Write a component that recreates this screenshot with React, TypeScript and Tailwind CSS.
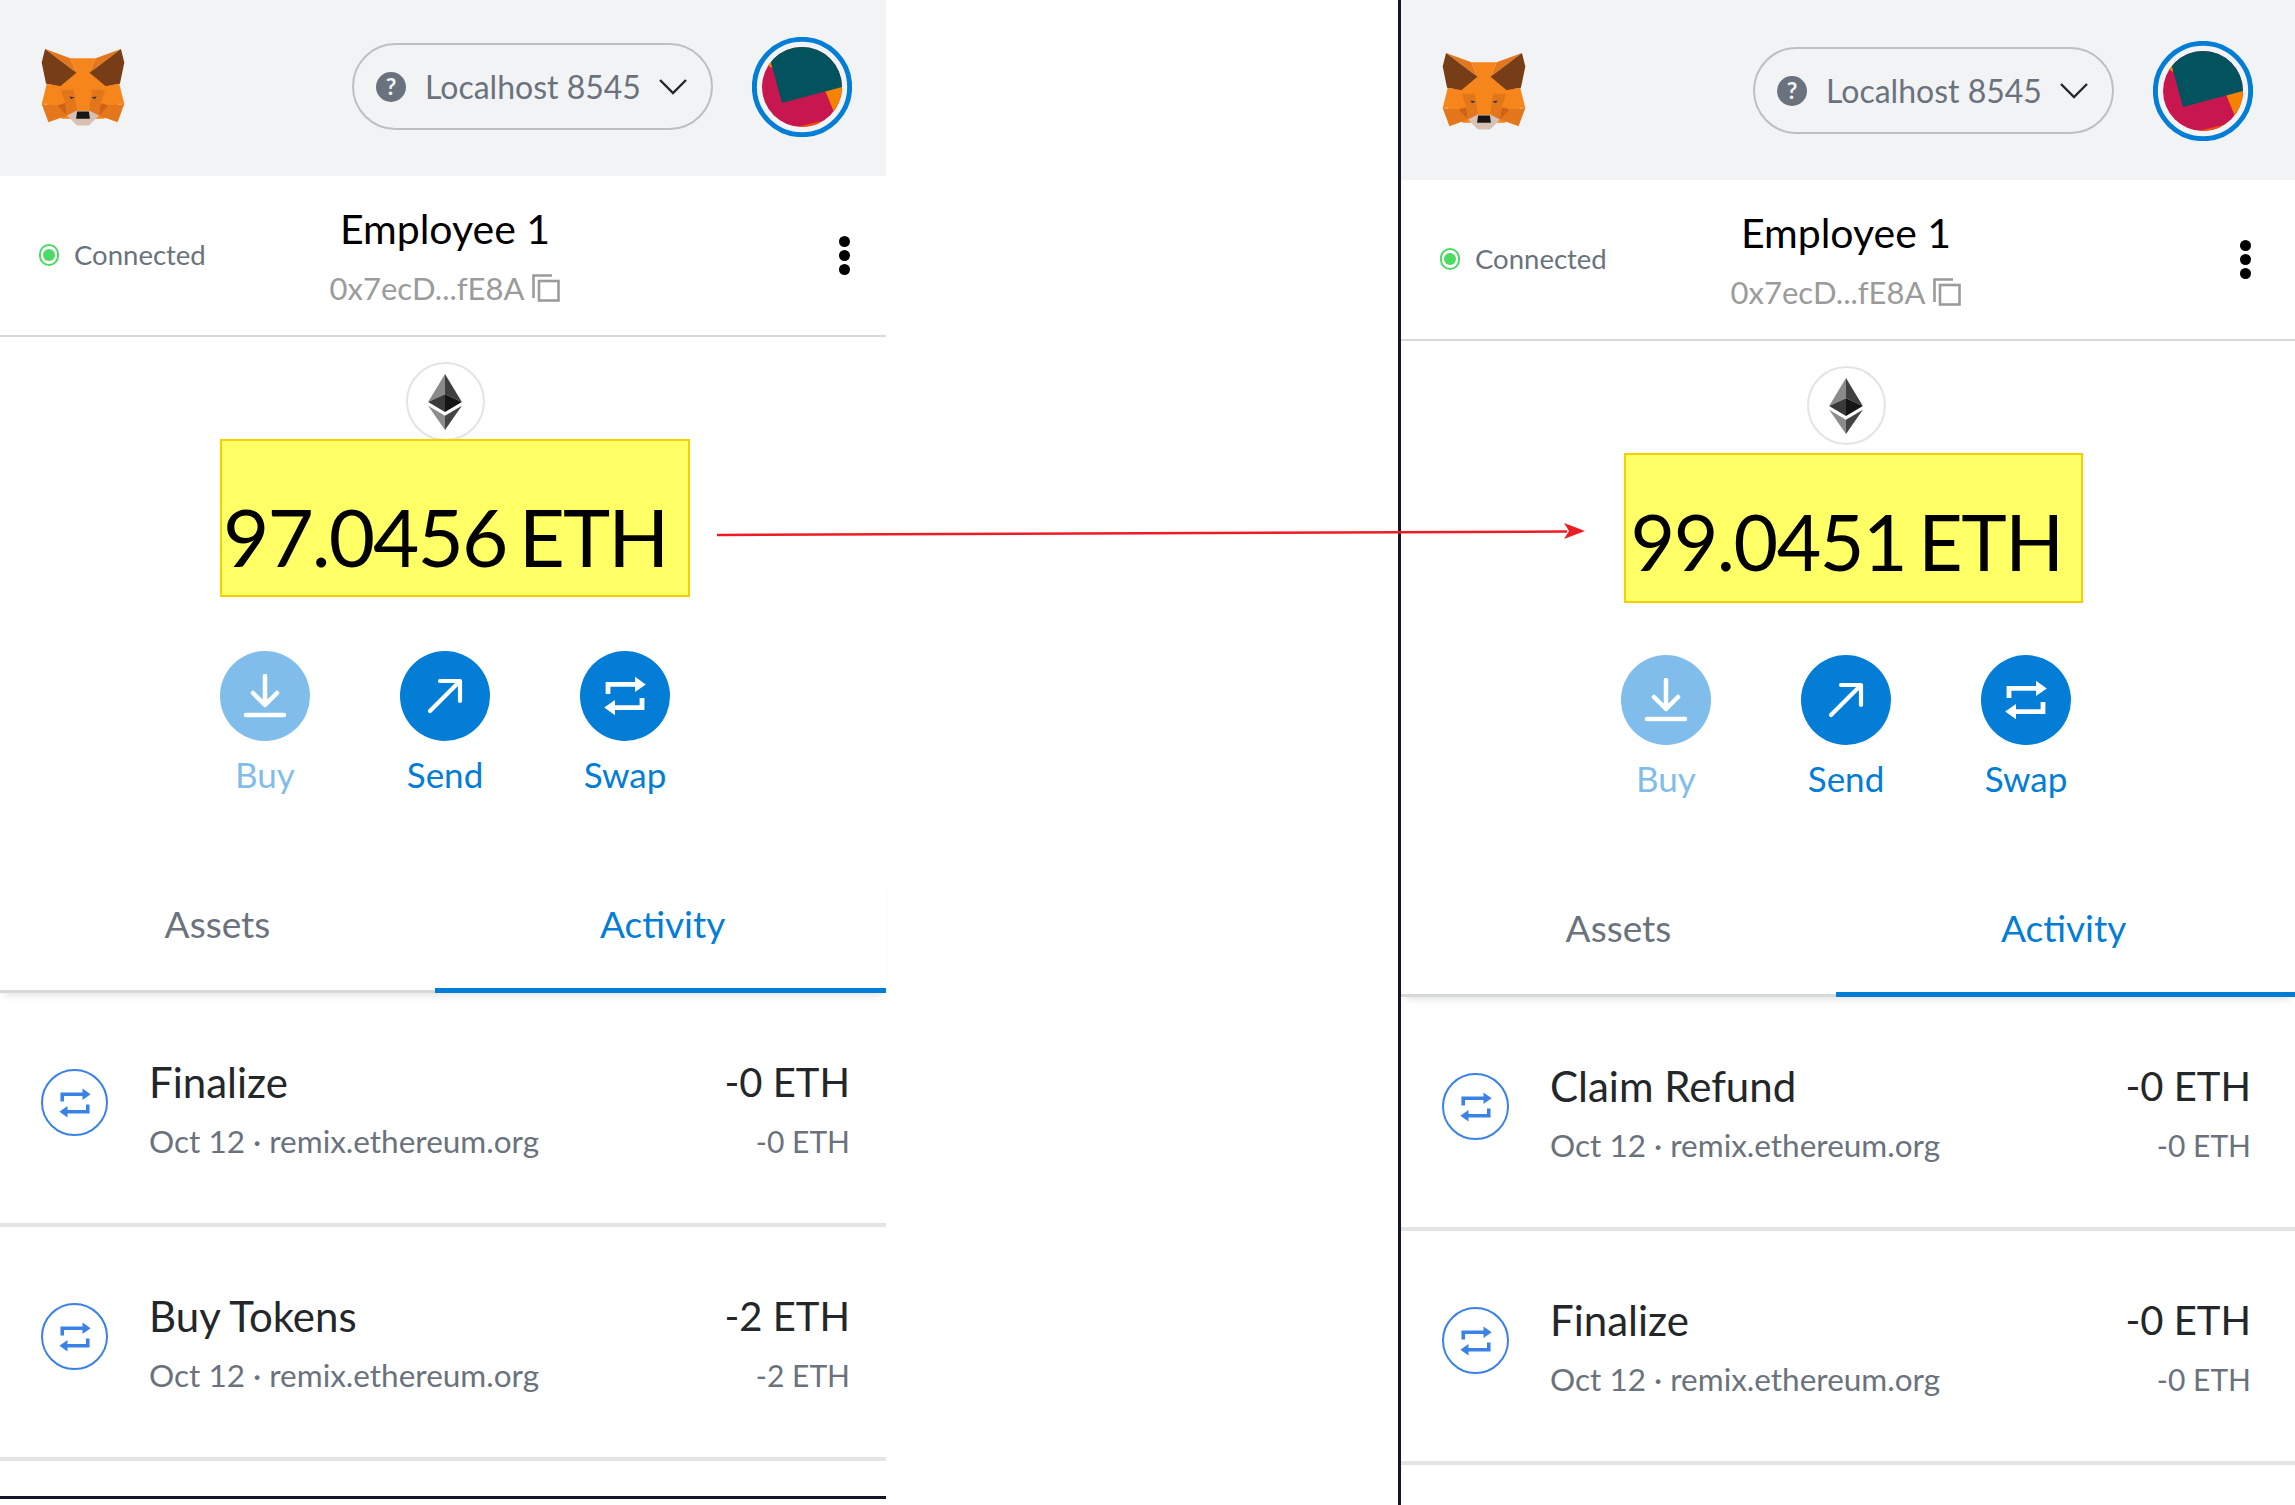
const font = { fontFamily: '"Lato", "Open Sans", sans-serif' };

function Fox() {
  const half = (
    <>
      <polygon points="75,55 150,82 168,125" fill="#e4761b" />
      <polygon points="75,55 168,125 120,165 78,158 65,95" fill="#763d16" />
      <polygon points="80,158 120,165 135,215 65,218" fill="#f6851b" />
      <polygon points="65,218 112,222 140,252 85,272" fill="#e4761b" />
      <polygon points="112,222 135,215 140,252" fill="#cd6116" />
      <polygon points="122,177 162,175 170,238 135,215" fill="#e2761b" />
      <polygon points="147,196 163,199 152,203" fill="#233447" />
      <polygon points="135,216 170,238 140,252" fill="#e4751f" />
    </>
  );
  return (
    <svg viewBox="60 50 255 235" className="h-[80px] w-[86px]">
      <polygon points="110,120 265,120 295,218 250,262 125,262 80,218" fill="#f6851b" />
      <polygon points="150,82 225,82 207,125 215,176 160,176 168,125" fill="#f6851b" />
      {half}
      <g transform="translate(375,0) scale(-1,1)">{half}</g>
      <polygon points="160,175 215,175 205,238 170,238" fill="#f6851b" />
      <polygon points="140,252 168,238 207,238 235,252 205,282 170,282" fill="#d7c1b3" />
      <polygon points="170,240 205,240 208,262 167,262" fill="#161616" />
    </svg>
  );
}

function Avatar() {
  return (
    <svg viewBox="35 47 300 300" className="h-[100px] w-[100px]">
      <clipPath id="jazz">
        <circle cx="185" cy="197" r="120" />
      </clipPath>
      <circle cx="185" cy="197" r="143" fill="none" stroke="#037dd6" strokeWidth="15" />
      <g clipPath="url(#jazz)">
        <rect x="60" y="70" width="250" height="250" fill="#c7174e" />
        <polygon points="80,130 95,115 95,140" fill="#f58300" />
        <polygon points="255,210 320,190 320,250 282,275" fill="#f58300" />
        <polygon points="165,318 255,297 250,325 170,325" fill="#f5530a" />
        <polygon points="92,125 70,40 320,40 320,193 125,245" fill="#03535e" />
      </g>
    </svg>
  );
}

function EthIcon() {
  return (
    <div className="flex h-[79px] w-[79px] items-center justify-center rounded-full border-2 border-[#e3e4e5] bg-white">
      <svg viewBox="115 72 100 166" className="h-[56px] w-[34px]">
        <polygon points="165,72 115,155 165,132" fill="#8a8a8a" />
        <polygon points="165,72 215,155 165,132" fill="#3f3f3f" />
        <polygon points="115,155 165,132 165,185" fill="#3a3a3a" />
        <polygon points="215,155 165,132 165,185" fill="#151515" />
        <polygon points="115,166 165,196 165,238" fill="#8c8c8c" />
        <polygon points="215,166 165,196 165,238" fill="#444444" />
      </svg>
    </div>
  );
}

function SwapGlyph({ className }: { className: string }) {
  return (
    <svg viewBox="0 0 24 24" className={className} fill="currentColor">
      <path d="M3.5 11V6.2H18" fill="none" stroke="currentColor" strokeWidth="2.4" />
      <polygon points="17,2.4 22.4,6.2 17,10" />
      <path d="M20.5 13v4.8H6" fill="none" stroke="currentColor" strokeWidth="2.4" />
      <polygon points="7,14 1.6,17.8 7,21.6" />
    </svg>
  );
}

function ActionButton({ label, faded, children }: { label: string; faded?: boolean; children: React.ReactNode }) {
  return (
    <div className={`flex w-[120px] flex-col items-center ${faded ? 'opacity-50' : ''}`}>
      <div className="flex h-[90px] w-[90px] items-center justify-center rounded-full bg-[#037dd6] text-white">
        {children}
      </div>
      <span className="mb-[2px] mt-[13px] text-[35px] leading-[40px] text-[#037dd6]">{label}</span>
    </div>
  );
}

function TxRow({ title, amount }: { title: string; amount: string }) {
  return (
    <div className="h-[234px] border-b-4 border-[#e3e4e5]">
      <div className="flex w-[886px] items-start pl-[41px] pr-[36px] pt-[59px]">
        <div className="mt-[17px] flex h-[67px] w-[67px] shrink-0 items-center justify-center rounded-full border-2 border-[#3b82e6] text-[#3b82e6]">
          <SwapGlyph className="h-[36px] w-[36px]" />
        </div>
        <div className="ml-[41px] flex-1">
          <div className="flex items-center justify-between leading-[60px] text-[#24272a]">
            <span className="text-[42px]">{title}</span>
            <span className="text-[40px]">{amount}</span>
          </div>
          <div className="flex items-center justify-between leading-[58px] text-[#6a737d]">
            <span className="text-[31.5px]">Oct 12 · remix.ethereum.org</span>
            <span className="text-[30px]">{amount}</span>
          </div>
        </div>
      </div>
    </div>
  );
}

type PanelProps = {
  width: string;
  top: string;
  boxClass: string;
  balance: string;
  textClass: string;
  rows: { title: string; amount: string }[];
  footer?: boolean;
};

function Panel({ width, top, boxClass, balance, textClass, rows, footer }: PanelProps) {
  return (
    <div className={`flex shrink-0 flex-col ${width}`}>
      <header className={`flex bg-[#f2f3f4] ${top}`}>
        <div className="flex h-[176px] w-[886px] items-center pb-[3px]">
          <div className="ml-[40px]">
            <Fox />
          </div>
          <div className="ml-[226px] flex h-[87px] w-[361px] items-center rounded-full border-2 border-[#bbc0c5] pl-[22px] text-[#6a737d]">
            <div className="flex h-[30px] w-[30px] items-center justify-center rounded-full bg-[#6a737d] text-[23px] font-bold leading-none text-[#f2f3f4]">
              ?
            </div>
            <span className="ml-[19px] w-[222px] whitespace-nowrap text-[32px]">Localhost 8545</span>
            <svg viewBox="0 0 28 16" className="ml-[12px] h-[16px] w-[28px]" fill="none" stroke="#24272a" strokeWidth="2.4">
              <path d="M1 1l13 13L27 1" />
            </svg>
          </div>
          <div className="ml-[39px]">
            <Avatar />
          </div>
        </div>
      </header>

      <div className="border-b-2 border-[#d6d9dc]">
        <div className="flex h-[159px] w-[886px] items-center">
          <div className="flex w-[290px] items-center pb-[2px] pl-[39px]">
            <div className="flex h-[22px] w-[20px] items-center justify-center rounded-full border-2 border-[#4cd964]">
              <div className="h-[12px] w-[12px] rounded-full bg-[#4cd964]" />
            </div>
            <span className="ml-[15px] text-[27.5px] text-[#6a737d]">Connected</span>
          </div>
          <div className="flex w-[310px] flex-col items-center">
            <div className="text-[41px] leading-[52px] text-black">Employee 1</div>
            <div className="mt-[12px] flex items-center text-[31px] leading-[42px] text-[#9b9b9b]">
              <span>0x7ecD...fE8A</span>
              <svg viewBox="0 0 28 28" className="ml-[8px] h-[28px] w-[28px]" fill="none" stroke="#9b9b9b" strokeWidth="2.6">
                <path d="M1.5 24V1.5H20" />
                <rect x="7" y="7" width="19.5" height="19.5" />
              </svg>
            </div>
          </div>
          <div className="ml-auto mr-[36px] flex flex-col gap-[3px]">
            <div className="h-[11px] w-[11px] rounded-full bg-black" />
            <div className="h-[11px] w-[11px] rounded-full bg-black" />
            <div className="h-[11px] w-[11px] rounded-full bg-black" />
          </div>
        </div>
      </div>

      <div className="flex w-[886px] flex-col items-center pl-[4px] pt-[25px]">
        <EthIcon />
        <div className={`flex items-center border-2 border-[#f7cf00] bg-[#ffff66] text-black ${boxClass}`}>
          <span className={`whitespace-nowrap [word-spacing:-6px] ${textClass}`}>{balance}</span>
        </div>
        <div className="flex justify-center gap-[60px]">
          <ActionButton label="Buy" faded>
            <svg viewBox="0 0 44 44" className="h-[44px] w-[44px]" fill="none" stroke="currentColor" strokeWidth="4.5" strokeLinecap="round" strokeLinejoin="round">
              <path d="M22 2v28M10 19l12 12 12-12M3 41h38" />
            </svg>
          </ActionButton>
          <ActionButton label="Send">
            <svg viewBox="0 0 36 36" className="h-[36px] w-[36px]" fill="none" stroke="currentColor" strokeWidth="4.2" strokeLinecap="round" strokeLinejoin="round">
              <path d="M3 33L32 4M13 3h20v20" />
            </svg>
          </ActionButton>
          <ActionButton label="Swap">
            <SwapGlyph className="h-[48px] w-[48px]" />
          </ActionButton>
        </div>
      </div>

      <div className="mt-[84px] flex h-[113px] border-b-[3px] border-[#d6d9dc] text-[37px] shadow-[0_6px_8px_-4px_rgba(0,0,0,0.12)]">
        <div className="flex w-[435px] justify-center pt-[16px] text-[#6a737d]">Assets</div>
        <div className="-mb-[3px] flex flex-1 border-b-[5px] border-[#037dd6] pt-[16px] text-[#037dd6]">
          <span className="ml-[165px]">Activity</span>
        </div>
      </div>

      {rows.map((row) => (
        <TxRow key={row.title} title={row.title} amount={row.amount} />
      ))}

      {footer && <div className="mt-[35px] h-[3px] bg-[#14142b]" />}
    </div>
  );
}

export default function App() {
  return (
    <div className="relative flex h-[1505px] w-[2295px] overflow-hidden bg-white" style={font}>
      <Panel
        width="w-[886px]"
        top="h-[176px]"
        boxClass="-mt-[2px] ml-[20px] h-[158px] w-[470px] pl-[1px] pt-[36px] mb-[54px]"
        balance="97.0456 ETH"
        textClass="text-[80px] tracking-[-2px]"
        rows={[
          { title: 'Finalize', amount: '-0 ETH' },
          { title: 'Buy Tokens', amount: '-2 ETH' },
        ]}
        footer
      />
      <div className="flex-1" />
      <div className="w-[3px] bg-[#14142b]" />
      <Panel
        width="w-[894px]"
        top="h-[180px] pt-[4px]"
        boxClass="ml-[14px] mt-[8px] h-[150px] w-[459px] pl-[5px] pt-[27px] mb-[52px]"
        balance="99.0451 ETH"
        textClass="text-[77px] tracking-[-1.5px]"
        rows={[
          { title: 'Claim Refund', amount: '-0 ETH' },
          { title: 'Finalize', amount: '-0 ETH' },
        ]}
      />
      <svg className="absolute left-[715px] top-[520px] h-[24px] w-[872px]" viewBox="0 0 872 24">
        <path d="M2 15L852 11.5" stroke="#ed1c24" strokeWidth="2.5" />
        <polygon points="849,3 870,11 849,19 854,11" fill="#ed1c24" />
      </svg>
    </div>
  );
}
